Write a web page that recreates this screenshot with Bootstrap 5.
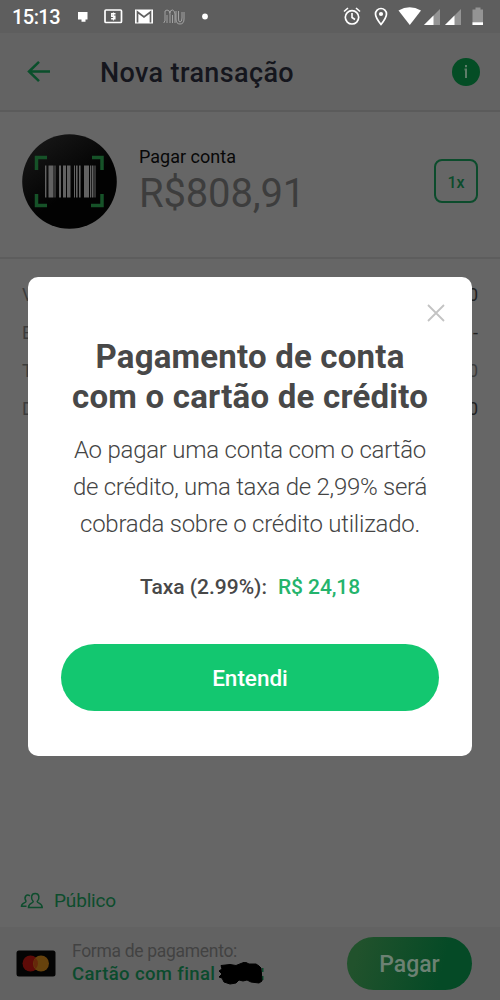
<!DOCTYPE html>
<html lang="pt-BR">
<head>
<meta charset="utf-8">
<meta name="viewport" content="width=device-width, initial-scale=1">
<title>Nova transação</title>
<link href="https://cdn.jsdelivr.net/npm/bootstrap@5.3.0/dist/css/bootstrap.min.css" rel="stylesheet">
<style>
body{font-family:Roboto,"Liberation Sans",sans-serif;background:#666;color:#4a4a4a}
.phone{width:500px;height:1000px;overflow:hidden;background:#666}
svg{display:block;flex:none}
.statusbar{height:33px;background:#5e5e5e;color:#fff;padding-left:12px;padding-right:14px}
.clock{font-size:20px;font-weight:500;line-height:33px;width:65px;white-space:nowrap;padding-top:1px}
.appbar{height:79px;background:#636363;border-bottom:2px solid #5b5b5b;padding:0 20px 0 25px}
.appbar-title{font-size:27px;font-weight:500;color:#15161d;margin:3px auto 0 48px;line-height:32px}
.bill{height:147px;border-bottom:2px solid #5d5d5d;padding:22px 22px 0}
.bill-text{margin:11px auto 0 22px}
.bill-name{font-size:18px;line-height:24px;color:#080808}
.bill-value{font-size:40px;line-height:44px;color:#3d3d3d;font-weight:400;margin-top:3px}
.times{width:44px;height:44px;border:2.500px solid #0c4c2c;border-radius:8px;color:#0c4c2c;font-size:16px;font-weight:500;margin-top:25px;padding-top:3px}
.details{padding:17px 22px 0;font-size:18px;color:#3c3c3c}
.details > div{height:38px;line-height:38px}
.details .amount{color:#222}
.privacy{color:#0d4d2d;font-size:19px;padding:2px 20px 0;height:54px}
.privacy-label{margin-left:10px}
.footer-pay{height:73px;background:#626262;padding:0 28px 0 16px}
.pay-label{font-size:17.5px;line-height:22px;color:#424242}
.pay-method{font-size:18.5px;line-height:25px;font-weight:500;color:#0b4b2d}
.pay-btn{width:125px;height:53px;background:linear-gradient(105deg,#21522c 10%,#054a26 75%);color:#6c8173;font-size:23px;font-weight:500}
.dialog-box{left:27.500px;top:277px;width:444.500px;height:479px;background:#fff;border-radius:10px;padding:27px 33px 0 33.500px}
.dialog-close{margin-right:-7px}
.dialog-title{font-size:33px;line-height:40px;font-weight:700;color:#484848;margin:15px 0 0}
.dialog-copy{font-size:24px;line-height:37px;font-weight:300;color:#444;margin:15px 0 0}
.fee{font-size:21px;line-height:28px;font-weight:500;margin-top:30px;color:#484848}
.fee-value{color:#24b46c;margin-left:11px}
.ok-btn{width:378px;height:67px;background:#13c770;color:#fff;font-size:22.5px;font-weight:500;margin-top:43px;padding:2px 0 0!important}
.line{white-space:nowrap;display:flex;justify-content:center}
</style>
</head>
<body>
<main class="phone position-relative d-flex flex-column">
  <div class="statusbar d-flex align-items-center">
    <span class="clock"><span class="fit" data-w="48">15:13</span></span>
    <svg width="140" height="33" viewBox="77 0 140 33" fill="none" stroke="#fff">
      <path d="M78 12h9.500v7.500h-2v2.200h-4v-2.200H78z" fill="#fff" stroke="none"/>
      <rect x="105" y="10" width="16.500" height="12.500" rx="1" stroke-width="1.700"/>
      <path d="M115.500 13.800h-3.700v2.500h3v2.500h-3.700" stroke-width="1.500"/><path d="M113.400 12.500v8" stroke-width="1"/>
      <path d="M135 9.500h18v14h-18z" fill="#fff" stroke="none"/><path d="M137.500 22.500V12l6.500 5 6.500-5v10.500" stroke="#606060" stroke-width="1.700"/>
      <path d="M164 23v-1l1-1v-7q-1-4 2-4 3 0 3 4v9M167 23v-8M170 13q0-3 2.500-3 2.500 1 2.500 4v9M172.500 23v-8M176 11v8q0 5 4 5 4 0 4-5v-7M178.500 11v8q0 3 1.500 3 2 0 2-4v-6" stroke="#b4b4b4" stroke-width=".8"/>
      <circle cx="205" cy="16.500" r="2.900" fill="#fff" stroke="none"/>
    </svg>
    <svg class="ms-auto" width="144" height="33" viewBox="342 0 144 33" fill="none" stroke="#fff">
      <circle cx="352" cy="17.300" r="6.700" stroke-width="1.700"/><path d="M352 13v4.500l3 2M344 11.500l4-3.500M360 11.500l-4-3.500" stroke-width="1.600"/>
      <path d="M381 24.500c-4-5-5.500-7.500-5.500-10.500a5.500 5.500 0 0 1 11 0c0 3-1.500 5.500-5.500 10.500z" stroke-width="1.700"/><circle cx="381" cy="14" r="2.100" fill="#fff" stroke="none"/>
      <path d="M398.500 10.500q11-6.500 22.500 0l-11.200 14.500z" fill="#fff" stroke="none"/>
      <g stroke="none"><path d="M440 9v16h-16z" fill="#949494"/><path d="M433.500 15.500V25H424z" fill="#fff"/><path d="M461 9v16h-16z" fill="#949494"/><path d="M454.500 15.500V25H445z" fill="#fff"/>
      <path d="M472.500 9.500h3V7.500h5v2h2.500V25h-10.500z" fill="#949494"/><path d="M472.500 22.300H483V25h-10.500z" fill="#fff"/></g>
    </svg>
  </div>
  <header class="appbar d-flex align-items-center">
    <svg width="27" height="24" viewBox="0 0 27 24" fill="none" stroke="#0a4f2b" stroke-width="2.500"><path d="M25 11.500H4M14 1.800L4 11.500l10 9.700"/></svg>
    <h1 class="appbar-title text-nowrap"><span class="fit" data-w="194">Nova transação</span></h1>
    <svg width="28" height="28" viewBox="0 0 28 28"><circle cx="14" cy="14" r="14" fill="#044d25"/><path d="M12.500 11.500H14V20M14 7v2.300" stroke="#5e7d69" stroke-width="2" fill="none"/></svg>
  </header>
  <section class="bill d-flex align-items-start">
    <svg width="95" height="95" viewBox="0 0 95 95">
      <defs><linearGradient id="disc" x2=".7" y2="1"><stop stop-color="#1b1b1b"/><stop offset=".65" stop-color="#020202"/></linearGradient></defs>
      <circle cx="47.500" cy="47.500" r="47.300" fill="url(#disc)"/>
      <path d="M14.500 36V23.500h10.500M70 23.500h10v12.500M14.500 60v11.500h10.500M69 71.500h11v-11.500" fill="none" stroke="#165228" stroke-width="3.500"/>
      <path d="M23 31.500h1.400v32H23zM26.500 31.500h5v32h-5zM32.500 31.500h1v32h-1zM37 31.500h2v32h-2zM41 31.500h3v32h-3zM45 31.500h3.500v32H45zM52 31.500h1v32h-1zM54 31.500h1.600v32H54zM57 31.500h1.600v32H57zM62 31.500h5v32h-5zM68 31.500h1.300v32H68zM70 31.500h1.500v32H70zM72.500 31.500h1v32h-1z" fill="#626262"/>
    </svg>
    <div class="bill-text text-nowrap">
      <div class="bill-name"><span class="fit" data-w="97">Pagar conta</span></div>
      <div class="bill-value"><span class="fit" data-w="166">R$808,91</span></div>
    </div>
    <div class="times d-flex align-items-center justify-content-center">1x</div>
  </section>
  <section class="details">
    <div class="d-flex justify-content-between"><span>V</span><span class="amount">0</span></div>
    <div class="d-flex justify-content-between"><span>E</span><span class="amount">-</span></div>
    <div class="d-flex justify-content-between"><span>T</span><span>0</span></div>
    <div class="d-flex justify-content-between"><span>D</span><span class="amount">0</span></div>
  </section>
  <div class="privacy mt-auto d-flex align-items-center">
    <svg width="24" height="18" viewBox="0 0 24 18" fill="none" stroke="#0d4d2d" stroke-width="1.500"><path d="M13.200 9.500C10.500 6.500 11 1.500 15.200 1.500S20 6.500 17.200 9.500c.3 2 5 1.500 5 6H8.500c0-4.500 4.500-4 4.700-6zM10 3.800C6.500 1.500 3.500 5 6 9.200c0 2-4.500 1.300-4.500 5h5"/></svg>
    <span class="privacy-label"><span class="fit" data-w="62">Público</span></span>
  </div>
  <footer class="footer-pay d-flex align-items-center">
    <svg width="40" height="27" viewBox="0 0 40 27"><rect x=".5" y=".5" width="39" height="26" rx="2.500" fill="#040404"/><circle cx="14.500" cy="13.500" r="8" fill="#5e0b08"/><circle cx="25" cy="13.500" r="8" fill="#66420d"/><path d="M19.700 8a8 8 0 0 1 0 11 8 8 0 0 1 0-11" fill="#66280a"/></svg>
    <div class="ms-3 text-nowrap">
      <div class="pay-label"><span class="fit" data-w="165">Forma de pagamento:</span></div>
      <div class="pay-method d-flex align-items-center"><span class="fit" data-w="143">Cartão com final</span>
        <svg class="ms-1" width="46" height="25" viewBox="0 0 46 25"><path d="M43 6h1.500v4H43zM43 14h1.500v4H43z" fill="#0b4b2d"/><path d="M2 3.500l9-1 6 1 5-2 4-1.500 4 2h7l3 2 2 2 1 13-3 2-8-1-4-2-4 1-4-1-3 3-6 1-6-2-2-4-3-1 3-3-3-3 3-2z" fill="#000" stroke="#000" stroke-linejoin="round"/></svg>
      </div>
    </div>
    <button class="pay-btn btn rounded-pill border-0 ms-auto p-0 pt-1" type="button">Pagar</button>
  </footer>
  <section class="dialog-box position-absolute text-center" role="dialog" aria-modal="true">
    <svg class="dialog-close ms-auto" width="20" height="18" viewBox="0 0 20 18"><path d="M2 1l16 16M18 1L2 17" stroke="#c3c3c3" stroke-width="1.800"/></svg>
    <h2 class="dialog-title"><span class="line"><span class="fit" data-w="309">Pagamento de conta</span></span><span class="line"><span class="fit" data-w="356">com o cartão de crédito</span></span></h2>
    <p class="dialog-copy"><span class="line"><span class="fit" data-w="352">Ao pagar uma conta com o cartão</span></span><span class="line"><span class="fit" data-w="354">de crédito, uma taxa de 2,99% será</span></span><span class="line"><span class="fit" data-w="340">cobrada sobre o crédito utilizado.</span></span></p>
    <div class="fee line"><span class="fit" data-w="127">Taxa (2.99%):</span><span class="fee-value fit" data-w="82">R$ 24,18</span></div>
    <button class="ok-btn btn rounded-pill border-0" type="button">Entendi</button>
  </section>
</main>
<script src="https://cdn.jsdelivr.net/npm/bootstrap@5.3.0/dist/js/bootstrap.bundle.min.js"></script>
<script>
document.querySelectorAll('.fit').forEach(function (el) {
  el.style.display = 'inline-block';
  var extra = (el.dataset.w - el.getBoundingClientRect().width) / el.textContent.length;
  el.style.letterSpacing = extra.toFixed(3) + 'px';
});
</script>
</body>
</html>
